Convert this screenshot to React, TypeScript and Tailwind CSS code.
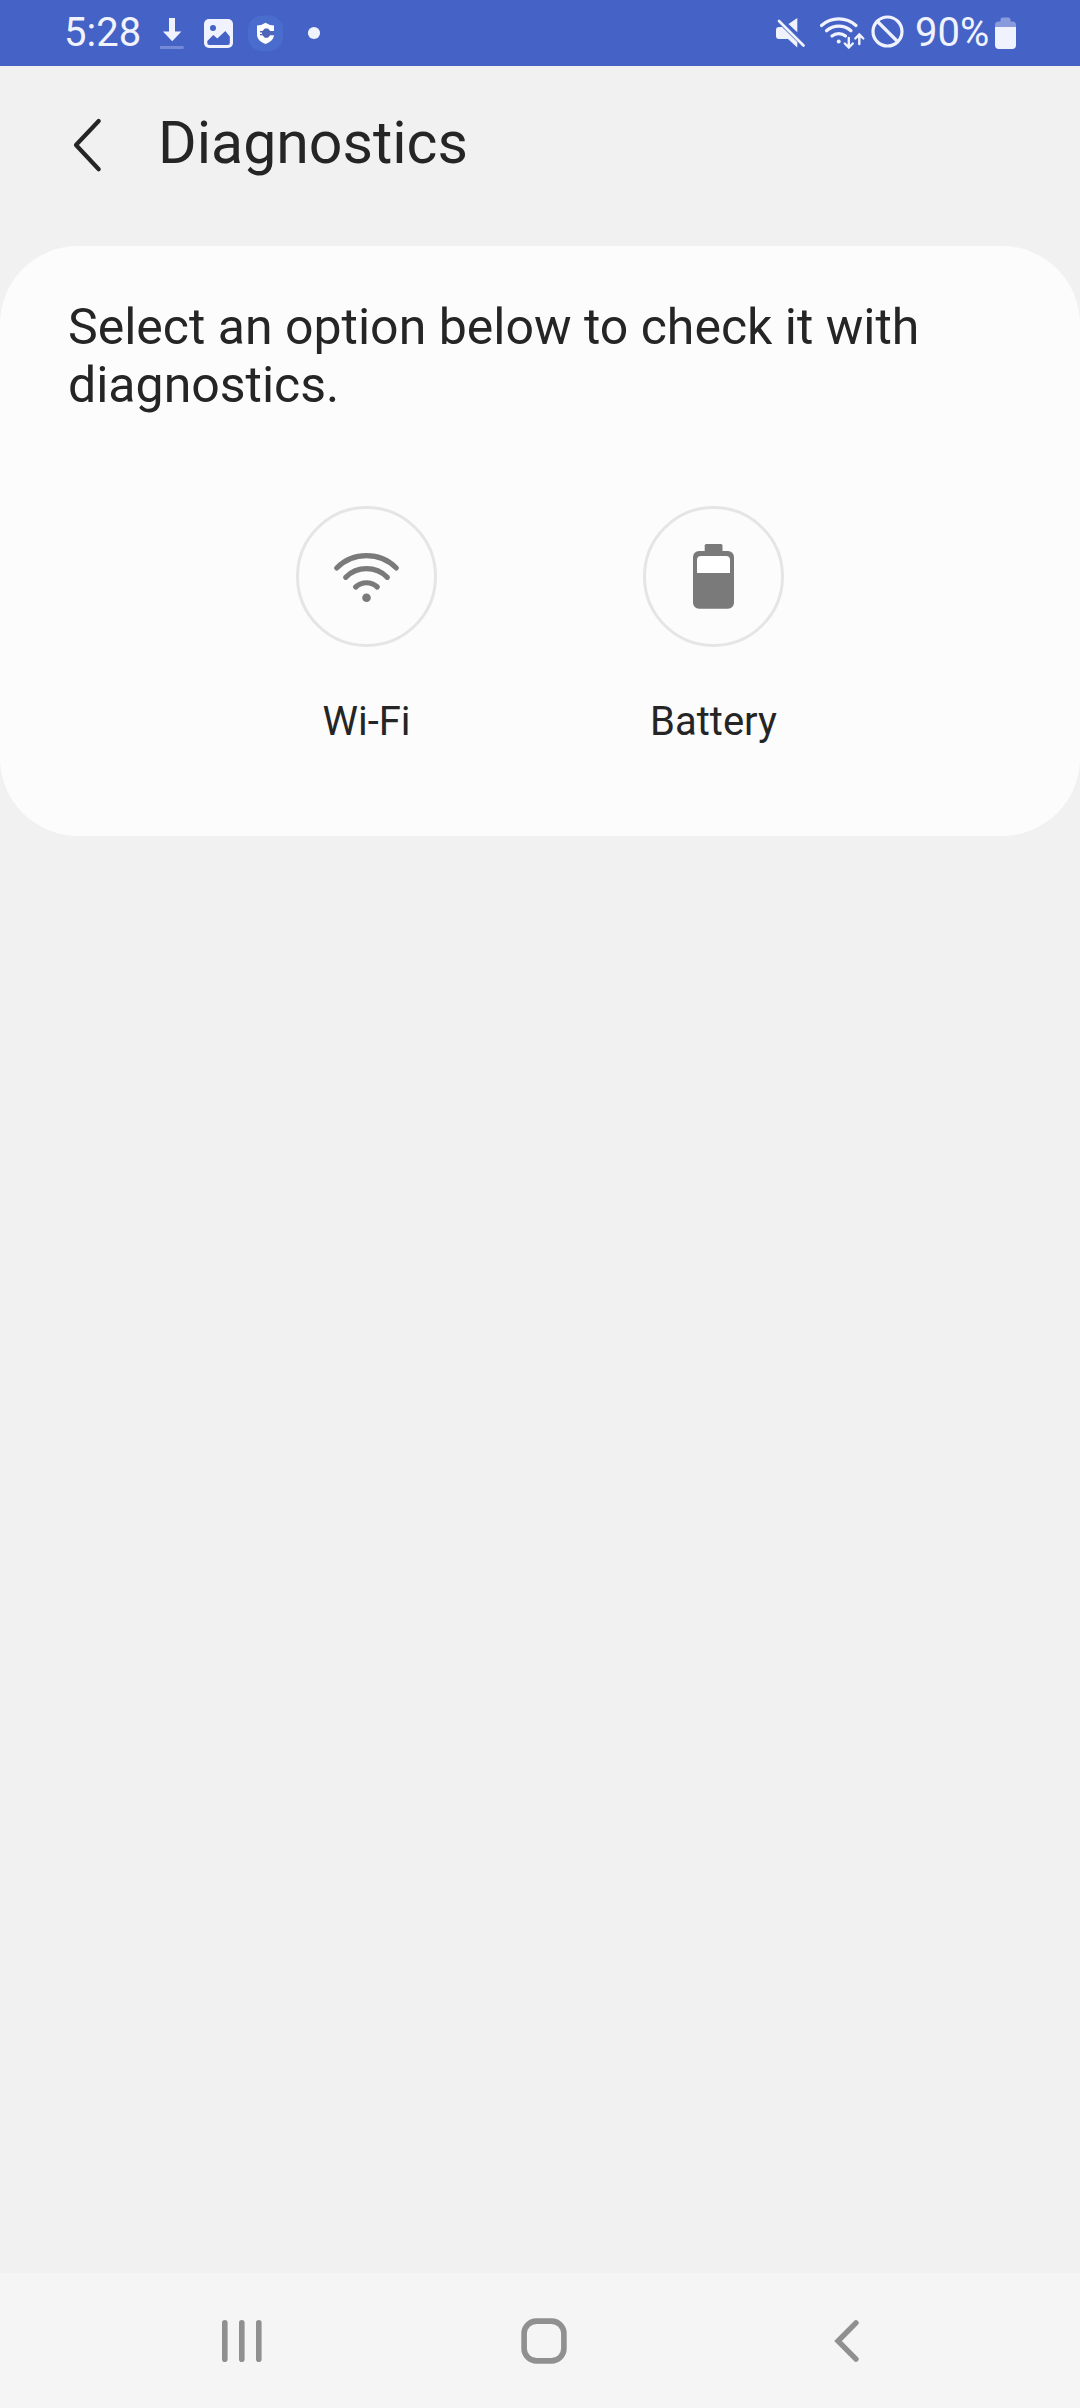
import React from "react";

function StatusLeft() {
  return (
    <svg width="170" height="66" viewBox="156 0 170 66" fill="none">
      <path d="M169 18h6v13.500h6.400l-9.200 9.700-9.300-9.700h6.100z" fill="#f0f3fd" />
      <rect x="160" y="46" width="23.600" height="3" fill="#748ad6" />
      <rect x="204" y="19" width="29" height="29" rx="5" fill="#f0f3fd" />
      <circle cx="213" cy="28" r="3" fill="#4562c6" />
      <path d="M207.300 41l6-6 4 3.600 8-7.600 4.500 5.500v6.500q0 2-2 2h-18.500q-2 0-2-2z" fill="#4562c6" />
      <rect x="248" y="15.500" width="35" height="35.500" rx="14" fill="#4a6dcd" />
      <path d="M265.500 22.800q4 2.800 8.500 2.800v9c0 5-4 7.500-8.500 9.500c-4.500-2-8.500-4.500-8.500-9.500v-9q4.500 0 8.500-2.800z" fill="#fff" />
      <path d="M260 31h2.500l2.300-2.400h3.200l2.200 2.400h4v4.200h-4l-2.200 2.600h-3.200l-2.300-2.600h-2.500v-1.300h2v-1.500h-2z" fill="#4f66b8" />
      <circle cx="314" cy="33" r="6.100" fill="#f0f3fd" />
    </svg>
  );
}

function StatusRight() {
  return (
    <svg width="134" height="66" viewBox="774 0 134 66" fill="none" stroke="#f0f3fd" strokeLinecap="round">
      <g stroke="none" fill="#f0f3fd">
        <path d="M797.300 18v14.200l-8.800-8.300z" />
        <path d="M776 30q0-3 3-3h3l15.300 15v5.500l-9.300-8.500h-9q-3 0-3-3z" />
      </g>
      <path d="M779 21l24.500 24.500" strokeWidth="2.700" />
      <g strokeWidth="3.200">
        <path d="M821.500 25.500a26 26 0 0 1 34.500 0" />
        <path d="M826.500 30.700a18.500 18.500 0 0 1 24.500 0" />
        <path d="M832 36a10.500 10.500 0 0 1 13.500 0" />
      </g>
      <circle cx="838.700" cy="41.500" r="2" fill="#f0f3fd" stroke="none" />
      <path d="M848.800 38v9.500m-4-4l4 4 4-4M859.300 44v-9.500m-4 4l4-4 4 4" strokeWidth="2.400" />
      <circle cx="887.500" cy="31.500" r="14.500" strokeWidth="3.200" />
      <path d="M877.500 21.500l20 20" strokeWidth="3.200" />
    </svg>
  );
}

function Option({ label, children }: { label: string; children: React.ReactNode }) {
  return (
    <div className="flex w-[347px] flex-col items-center">
      <div className="flex h-[141px] w-[141px] items-center justify-center rounded-full border-[3px] border-[#e5e5e5]">
        <svg width="141" height="141" viewBox="0 0 141 141" fill="none" className="shrink-0">
          {children}
        </svg>
      </div>
      <div className="mt-[51px] text-[40px] leading-[48px]">{label}</div>
    </div>
  );
}

export default function App() {
  return (
    <div className="flex h-[2408px] w-[1080px] flex-col bg-[#f1f1f1] font-[Roboto,sans-serif] text-[#252525]">
      <div className="flex h-[66px] items-center bg-[#4562c6] pl-[64px] text-[40px] leading-[48px] text-[#f0f3fd]">
        <span className="w-[92px]">5:28</span>
        <StatusLeft />
        <div className="ml-auto flex items-center pr-[63px]">
          <StatusRight />
          <span className="ml-[7px] w-[80px]">90%</span>
          <svg width="22" height="66" viewBox="0 0 22 66">
            <path d="M0 27v-2q0-3.500 3.500-3.500h2v-2q0-2 2-2h6q2 0 2 2v2h2q3.500 0 3.500 3.500v2z" fill="#899bdc" />
            <path d="M0 27h21v18q0 4-4 4h-13q-4 0-4-4z" fill="#f0f3fd" />
          </svg>
        </div>
      </div>

      <header className="flex h-[180px] items-center pb-[23px] pl-[70px]">
        <svg width="36" height="60" viewBox="0 0 36 60" fill="none" stroke="#252525" strokeWidth="4.200" strokeLinecap="round" strokeLinejoin="round">
          <path d="M28.700 6L6 30l22.700 24.200" />
        </svg>
        <h1 className="mb-[3px] ml-[52px] text-[59px] leading-[70px]">Diagnostics</h1>
      </header>

      <main className="h-[590px] rounded-[78px] bg-[#fcfcfc] pt-[52px]">
        <p className="w-[920px] pl-[68px] text-[50px] leading-[58px]">
          Select an option below to check it with
          <br />
          diagnostics.
        </p>
        <div className="mt-[92px] flex justify-center">
          <Option label="Wi-Fi">
            <g stroke="#7a7a7a" strokeWidth="5.200" strokeLinecap="round">
              <path d="M40.700 62a42.200 42.200 0 0 1 59.600 0" />
              <path d="M49.700 71.300a29.500 29.500 0 0 1 41.600 0" />
              <path d="M59.700 81a15.800 15.800 0 0 1 21.600 0" />
            </g>
            <circle cx="70.500" cy="91.700" r="4.300" fill="#7a7a7a" />
          </Option>
          <Option label="Battery">
            <rect x="61.700" y="38" width="17.800" height="12" rx="1.500" fill="#7a7a7a" />
            <rect x="50" y="45" width="41" height="57.700" rx="6" fill="#7a7a7a" />
            <path d="M54 67V54q0-4 4-4h25q4 0 4 4v13z" fill="#fff" />
          </Option>
        </div>
      </main>

      <nav className="mt-auto flex h-[135px] items-center bg-[#f5f5f5] pl-[220px]">
        <svg width="44" height="50" viewBox="220 2316 44 50" stroke="#909090" strokeWidth="5.600" strokeLinecap="round">
          <path d="M224.800 2322.800v36.400M241.800 2322.800v36.400M258.800 2322.800v36.400" />
        </svg>
        <svg className="ml-[255px]" width="50" height="50" viewBox="0 0 50 50" fill="none">
          <rect x="5.100" y="5.100" width="39.800" height="39.800" rx="12.500" stroke="#909090" strokeWidth="5.600" />
        </svg>
        <svg className="ml-[261px]" width="32" height="50" viewBox="0 0 32 50" fill="none" stroke="#909090" strokeWidth="5.400" strokeLinecap="round">
          <path d="M26 6.800L8 25l18 18.200" />
        </svg>
      </nav>
    </div>
  );
}
